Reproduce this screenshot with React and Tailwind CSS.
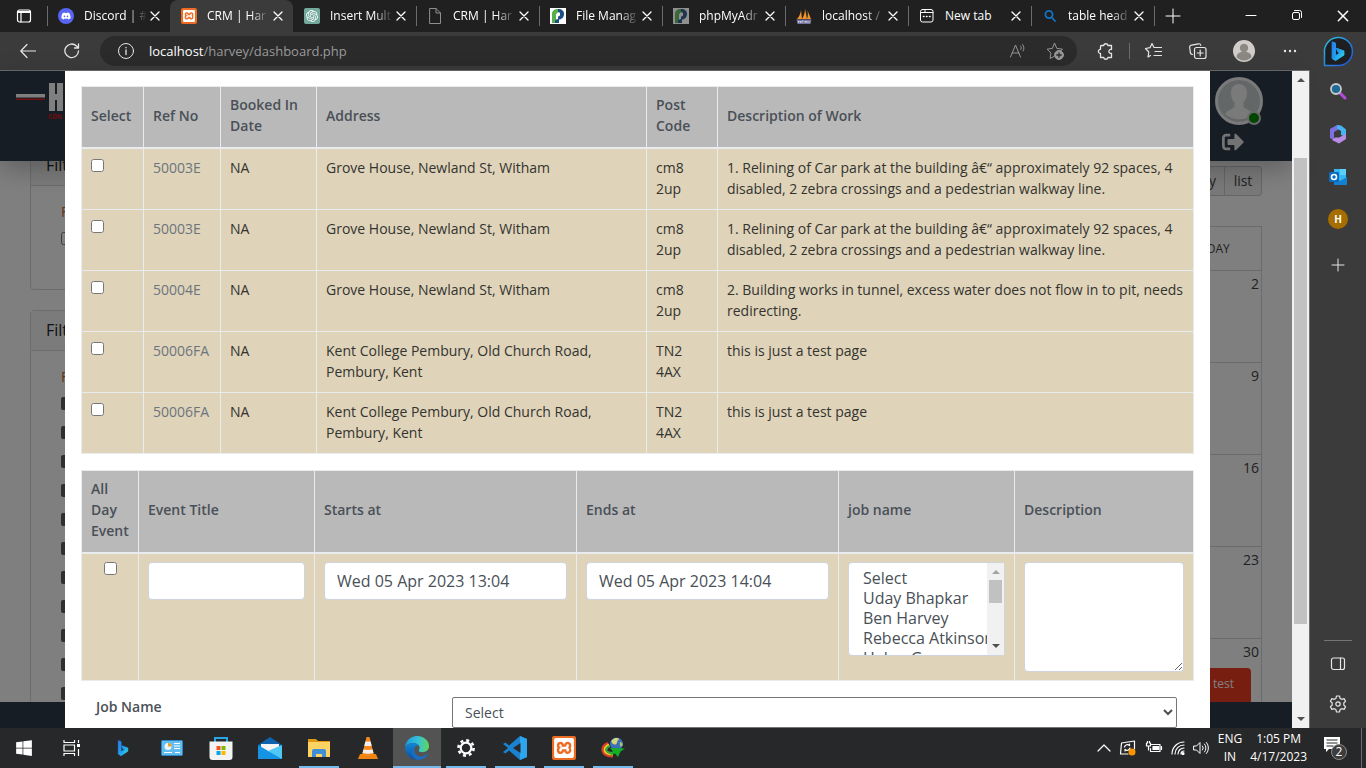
import React from "react";
import { FaDiscord, FaSignOutAlt, FaWindows } from "react-icons/fa";
import { SiOpenai, SiXampp } from "react-icons/si";

/* ---------- favicons ---------- */

function XamppIcon({ size = "size-4", inner = "size-3" }) {
  return (
    <span className={`flex ${size} items-center justify-center rounded-xs bg-[#ee6b22]`}>
      <SiXampp className={`${inner} text-white`} />
    </span>
  );
}

function PleskIcon({ dim }) {
  return (
    <svg viewBox="0 0 16 16" className={dim ? "size-4 opacity-50" : "size-4"}>
      <rect width="16" height="16" fill="#fff" />
      <path d="M2 15V7a5 5 0 0 1 5-6h2v3.500a3 3 0 0 0-3 3V15z" fill="#58b04c" />
      <path d="M8 1c4 0 6 2 6 5s-2 5.500-5 5.500V15H5v-3l3-1V8.500A2 2 0 0 0 10 6 2 2 0 0 0 8 4z" fill="#1c4f86" />
      <circle cx="8.500" cy="6" r="1.600" fill="#fff" />
    </svg>
  );
}

function SailIcon() {
  return (
    <svg viewBox="0 0 16 16" className="size-4">
      <path d="M1 11C3 9 4.500 6 5 2l1 9zM6 11C8 8 9 4 9 .5L11 11zM11 11c1-3 1-5 .5-8.500L15 11z" fill="#f0932b" />
      <path d="M.5 11.500h15l-1 4.500H1.500z" fill="#75739b" />
      <path d="M2.500 15v-2l1 1 1-1v2M6 15v-2h1.500M9 15v-2l1 1 1-1v2M13 13v2" stroke="#e4e3f2" strokeWidth=".7" fill="none" />
    </svg>
  );
}

const line = { fill: "none", stroke: "currentColor", strokeWidth: 1, strokeLinecap: "round", strokeLinejoin: "round" };

function PageIcon() {
  return (
    <svg viewBox="0 0 16 16" className="size-4 text-[#8f8f8f]" {...line}>
      <path d="M3 .5h6l4.500 4.500v10.500H3zM9 .5V5h4.500" />
    </svg>
  );
}

function NewTabIcon() {
  return (
    <svg viewBox="0 0 16 16" className="size-4 text-white" {...line}>
      <rect x="1.500" y="1.500" width="12.500" height="12.500" rx="2" />
      <path d="M1.500 4.500h12.500M6 1.500v3" />
      <path d="M4.500 8.500h.5M7.500 8.500h.5M10.500 8.500h.5" strokeWidth="1.500" />
    </svg>
  );
}

function SearchIcon() {
  return (
    <svg viewBox="0 0 16 16" className="size-4 text-[#1273c4]" {...line} strokeWidth="1.800">
      <circle cx="7" cy="6.500" r="3.600" />
      <path d="M9.800 9.500L13 13" />
    </svg>
  );
}

function Cross({ className = "size-3" }) {
  return (
    <svg viewBox="0 0 12 12" className={className} {...line} strokeWidth="1.300">
      <path d="M2 2l8 8M10 2l-8 8" />
    </svg>
  );
}

const tabs = [
  { title: "Discord | #", icon: <span className="flex size-4 items-center justify-center rounded-full bg-[#5865f2]"><FaDiscord className="size-2.5 text-white" /></span> },
  { title: "CRM | Har", icon: <XamppIcon />, active: true },
  { title: "Insert Mult", icon: <span className="flex size-4 items-center justify-center rounded-xs bg-[#74aa9c]"><SiOpenai className="size-3 text-white" /></span> },
  { title: "CRM | Har", icon: <PageIcon />, sep: true },
  { title: "File Manag", icon: <PleskIcon />, sep: true },
  { title: "phpMyAdr", icon: <PleskIcon dim />, sep: true },
  { title: "localhost /", icon: <SailIcon />, sep: true },
  { title: "New tab", icon: <NewTabIcon />, sep: true, full: true },
  { title: "table head", icon: <SearchIcon />, sep: true },
];

function TabStrip() {
  return (
    <header className="flex h-8 shrink-0 items-center bg-[#202020] text-white">
      <button aria-label="Tab actions" className="flex w-[47px] shrink-0 justify-center">
        <svg viewBox="0 0 16 16" className="size-4" {...line} strokeWidth="1.200">
          <rect x="1.500" y="2" width="13" height="12" rx="2" />
          <path d="M2 3.500h12M2 4.500h12M5 5v9" />
        </svg>
      </button>
      <nav className="flex h-full min-w-0 items-stretch">
        {tabs.map((t, i) => (
          <div
            key={i}
            className={`flex w-[123px] items-center ${t.active ? "rounded-t-lg bg-[#3b3b3b]" : ""}`}
          >
            <span className={`h-5 w-px ${t.sep || i === 0 ? "bg-[#6b6b6b]" : ""}`} />
            <a href="#tab" className="flex min-w-0 items-center gap-2.5 pl-2.5">
              <span className="shrink-0">{t.icon}</span>
              <span
                className={`w-16 whitespace-nowrap text-xs ${
                  t.full ? "" : "[mask-image:linear-gradient(to_right,black_68%,transparent_98%)]"
                }`}
              >
                {t.title}
              </span>
            </a>
            <button aria-label="Close tab" className="ml-px">
              <Cross />
            </button>
          </div>
        ))}
      </nav>
      <span className="h-5 w-px bg-[#6b6b6b]" />
      <button aria-label="Open new tab" className="ml-2.5">
        <svg viewBox="0 0 16 16" className="size-4" {...line}><path d="M8 1v14M1 8h14" /></svg>
      </button>
      <div className="ml-auto flex">
        <button aria-label="Minimise" className="flex w-[46px] justify-center">
          <svg viewBox="0 0 12 12" className="size-3" {...line}><path d="M1 6.500h10" /></svg>
        </button>
        <button aria-label="Restore" className="flex w-[46px] justify-center">
          <svg viewBox="0 0 12 12" className="size-3" {...line}>
            <rect x="1.500" y="3.500" width="7" height="7" rx="1.500" />
            <path d="M3.500 1.500h5a2 2 0 0 1 2 2v5" />
          </svg>
        </button>
        <button aria-label="Close window" className="flex w-[46px] justify-center">
          <Cross className="size-3.5" />
        </button>
      </div>
    </header>
  );
}

function BingMark({ className, id }) {
  return (
    <svg viewBox="0 0 24 26" className={className}>
      <defs>
        <linearGradient id={id} x1="0" y1="0" x2="1" y2="1">
          <stop offset="0" stopColor="#2b7ff0" />
          <stop offset=".5" stopColor="#1f9cf2" />
          <stop offset="1" stopColor="#35dfe0" />
        </linearGradient>
      </defs>
      <path
        d="M5 2l4 1.500v15l5.500-3.200-2.700-1.300-1.700-4.300 9 3.200v5L9 24.500l-4-2.500z"
        fill={`url(#${id})`}
        stroke={`url(#${id})`}
        strokeWidth="1.200"
        strokeLinejoin="round"
      />
    </svg>
  );
}

function AddressBar() {
  return (
    <div className="flex h-[38px] shrink-0 items-center bg-[#3b3b3b] text-[#e6e6e6]">
      <button aria-label="Back" className="ml-5">
        <svg viewBox="0 0 16 16" className="size-4" {...line} strokeWidth="1.200"><path d="M15.500 8H1M7 1.500L.8 8 7 14.500" /></svg>
      </button>
      <button aria-label="Reload" className="ml-7">
        <svg viewBox="0 0 16 16" className="size-4" {...line} strokeWidth="1.300">
          <path d="M14.500 8A6.800 6.800 0 1 1 12.500 3L14.500 5M14.500 1v4h-4" />
        </svg>
      </button>
      <div className="ml-5 flex h-[30px] flex-1 items-center rounded-full bg-[#2b2b2b] pr-3 pl-[17px]">
        <svg viewBox="0 0 18 18" className="size-[18px]" {...line}>
          <circle cx="9" cy="9" r="7.500" />
          <path d="M9 8v4.500M9 5.500v.3" strokeWidth="1.300" />
        </svg>
        <p className="ml-3.5 flex-1 pt-px text-[13px] text-[#9a9a9a]">
          <span className="text-white">localhost</span>/harvey/dashboard.php
        </p>
        <div className="flex items-center gap-[18px] text-[#969696]">
          <button aria-label="Read aloud">
            <svg viewBox="0 0 18 18" className="size-[18px]" {...line}>
              <path d="M1.500 15L6.500 3l5 12M3.200 11h6.600M11.500 4c1 1 1 2.500.3 3.500M13.500 2.500c1.800 2 1.800 4.500.6 6.500" />
            </svg>
          </button>
          <button aria-label="Add to favourites">
            <svg viewBox="0 0 20 20" className="size-5" {...line}>
              <path d="M9 15.500l-4 2 1-5.500-4-3.800 5.400-.8L9.500 2l2.300 5.400 5.700.8-1.500 1.500" />
              <circle cx="14" cy="14" r="4.500" fill="currentColor" />
              <path d="M14 11.800v4.400M11.800 14h4.400" stroke="#2b2b2b" strokeWidth="1.300" />
            </svg>
          </button>
        </div>
      </div>
      <div className="flex items-center pl-[18px]">
        <button aria-label="Extensions">
          <svg viewBox="0 0 20 20" className="size-5" {...line} strokeWidth="1.300">
            <path d="M6.500 4.500h2.200a2.200 2.200 0 0 1 4.300 0h3.500v4a2 2 0 1 0 0 3.800v4.200H13a2.200 2.200 0 0 1-4.300 0H5.500v-4a2.100 2.100 0 1 1 0-4.200V5.500a1 1 0 0 1 1-1z" />
          </svg>
        </button>
        <span className="ml-3.5 h-4 w-px bg-[#6a6a6a]" />
        <button aria-label="Favourites" className="ml-3.5">
          <svg viewBox="0 0 20 20" className="size-5" {...line} strokeWidth="1.200">
            <path d="M6.500 14.500l-2.500 1.500.8-5L1.500 7.500l4.500-.8L8 2.500l2 4h7.500M11 10.500h6.500M10 14.500h7.500" />
          </svg>
        </button>
        <button aria-label="Collections" className="ml-6">
          <svg viewBox="0 0 20 20" className="size-5" {...line} strokeWidth="1.200">
            <path d="M4.500 13.500A2.500 2.500 0 0 1 2.300 11L1.700 6.500a2 2 0 0 1 1.800-2.300l7-1.400a2 2 0 0 1 2.300 1.500M6.500 13.500v-5a2 2 0 0 1 2-2h7.500a2 2 0 0 1 2 2v7a2 2 0 0 1-2 2H8.500a2 2 0 0 1-2-2zM12.200 9v6M9.200 12h6" />
          </svg>
        </button>
        <button aria-label="Profile" className="ml-[25px]">
          <svg viewBox="0 0 22 22" className="size-[22px]">
            <circle cx="11" cy="11" r="11" fill="#d0cdca" />
            <circle cx="11" cy="8" r="4.200" fill="#8c8884" />
            <path d="M3.500 17a7.500 5.500 0 0 1 15 0 10 10 0 0 1-15 0z" fill="#8c8884" />
          </svg>
        </button>
        <button aria-label="Menu" className="ml-[27px]">
          <svg viewBox="0 0 16 4" className="h-1 w-4 fill-current"><circle cx="3" cy="2" r="1.200" /><circle cx="8" cy="2" r="1.200" /><circle cx="13" cy="2" r="1.200" /></svg>
        </button>
        <button aria-label="Bing chat" className="mr-3 ml-6 grid size-8 place-items-center [&>svg]:[grid-area:1/1]">
          <svg viewBox="0 0 32 32" className="size-8">
            <defs>
              <linearGradient id="bubble" x1="0" y1="0" x2="1" y2="1">
                <stop offset="0" stopColor="#2cc3d8" />
                <stop offset="1" stopColor="#1f4fe0" />
              </linearGradient>
            </defs>
            <path d="M2.500 30.500V18A14 14 0 1 1 16 30.500z" fill="#1d1f22" stroke="url(#bubble)" strokeWidth="1.500" strokeLinejoin="round" />
          </svg>
          <BingMark className="h-[22px] w-5" id="bing-top" />
        </button>
      </div>
    </div>
  );
}

/* ---------- dashboard behind the dialog ---------- */

function FilterCard({ tall, children }) {
  return (
    <section className={`mb-5 rounded border border-[#d8d8d8] ${tall ? "h-[420px]" : "h-[145px]"}`}>
      <h2 className="h-10 border-b border-[#d8d8d8] bg-[#f7f7f7] pl-[15px] text-base leading-[38px] text-[#22252b]">Filters</h2>
      <div className="pl-[30px]">{children}</div>
    </section>
  );
}

const sundays = ["2", "9", "16", "23", "30"];

function Dashboard() {
  return (
    <div className="flex h-full flex-col bg-white">
      <div className="relative z-10 flex h-[90px] shrink-0 justify-between bg-[#2e3b4b] shadow-[0_8px_24px_rgba(0,0,0,0.25)]">
        <a href="#home" aria-label="Home" className="ml-4 flex pt-3">
          <svg viewBox="0 0 80 40" className="h-10 w-20">
            <rect x="0" y="11" width="29" height="3.500" fill="#fff" />
            <rect x="0" y="15.500" width="29" height="1.500" fill="#e02020" />
            <path d="M33 0h6v11h2V0h6v28h-6V17h-2v11h-6z" fill="#fff" />
            <path d="M49 10h3v3h-3zM49 18h3v10h-3z" fill="#fff" />
            <text x="32" y="36" fontSize="6" fontWeight="800" fill="#c81e1e">CON</text>
          </svg>
        </a>
        <div className="mr-[29px] flex w-12 flex-col pt-1.5">
          <div className="relative">
            <svg viewBox="0 0 48 48" className="size-12">
              <circle cx="24" cy="24" r="22.500" fill="#c9ced1" stroke="#f4f4f4" strokeWidth="3" />
              <path d="M24 7c-5 0-8 3.500-8 9 0 4 1.500 7.500 3.500 9.500V30c-2 2.500-7 3-9.500 7a21 21 0 0 0 28 0c-2.500-4-7.500-4.500-9.500-7v-4.500c2-2 3.500-5.500 3.500-9.500 0-5.500-3-9-8-9z" fill="#f4f4f4" />
            </svg>
            <span className="absolute right-0.5 bottom-0 size-3.5 rounded-full border-2 border-[#d0d0d0] bg-[#008a00]" />
          </div>
          <a href="#logout" aria-label="Log out" className="ml-[7px] pt-1.5">
            <FaSignOutAlt className="size-[22px] text-[#e6e6e6]" />
          </a>
        </div>
      </div>
      <div className="-mt-4 flex min-h-0 flex-1 justify-between overflow-hidden px-[30px]">
        <div className="w-[300px]">
          <FilterCard>
            <p className="pt-4 text-sm text-[#c8651c]">Filter by</p>
            <input type="checkbox" aria-label="Filter option" className="mt-2.5 block size-[13px]" />
          </FilterCard>
          <FilterCard tall>
            <p className="pt-4 pb-1.5 text-sm text-[#c8651c]">Filter by</p>
            <ul>
              {Array.from({ length: 11 }, (_, i) => (
                <li key={i} className="h-[29px] pt-1">
                  <button aria-label="Collapse" className="flex size-[13px] items-center justify-center rounded-xs bg-[#5f5f5f]">
                    <span className="h-px w-1.5 bg-white" />
                  </button>
                </li>
              ))}
            </ul>
          </FilterCard>
        </div>
        <div className="w-[112px] pt-[21px]">
          <div className="flex h-[30px] justify-end text-sm text-[#444]">
            <button className="border border-[#ccc] bg-[#f2f2f2] px-2">day</button>
            <button className="w-[37px] rounded-r border border-l-0 border-[#ccc] bg-[#f2f2f2]">list</button>
          </div>
          <table className="mt-[30px] w-full border-collapse text-[#444]">
            <thead>
              <tr><th className="h-11 border border-[#d4d6dc] text-xs font-normal">SUNDAY</th></tr>
            </thead>
            <tbody>
              {sundays.map((d) => (
                <tr key={d}>
                  <td className="h-[92px] border border-[#d4d6dc] pt-[3px] pr-0.5 text-right align-top text-sm leading-5">
                    {d}
                    {d === "30" && (
                      <span className="relative mt-1.5 mr-2 block h-9 rounded bg-[#f03c22] pt-2 pr-[17px] text-right text-xs text-white">test</span>
                    )}
                  </td>
                </tr>
              ))}
            </tbody>
          </table>
        </div>
      </div>
      <div className="h-[26px] shrink-0 bg-[#2e3b4b]" />
    </div>
  );
}

/* ---------- dialog ---------- */

const jobs = [
  ["50003E", "Grove House, Newland St, Witham", "cm8 2up", "1. Relining of Car park at the building â€“ approximately 92 spaces, 4 disabled, 2 zebra crossings and a pedestrian walkway line."],
  ["50003E", "Grove House, Newland St, Witham", "cm8 2up", "1. Relining of Car park at the building â€“ approximately 92 spaces, 4 disabled, 2 zebra crossings and a pedestrian walkway line."],
  ["50004E", "Grove House, Newland St, Witham", "cm8 2up", "2. Building works in tunnel, excess water does not flow in to pit, needs redirecting."],
  ["50006FA", "Kent College Pembury, Old Church Road, Pembury, Kent", "TN2 4AX", "this is just a test page"],
  ["50006FA", "Kent College Pembury, Old Church Road, Pembury, Kent", "TN2 4AX", "this is just a test page"],
];

function Th({ children, className = "" }) {
  return (
    <th className={`border border-b-2 border-[#e9ecef] bg-[#b9b9b9] px-[9px] pt-[7px] pb-[11px] text-left align-middle font-semibold text-[#495057] ${className}`}>
      {children}
    </th>
  );
}

function Td({ children, pad = "pt-2 pb-2.5", className = "" }) {
  return <td className={`border border-[#e9ecef] bg-[#dfd3b9] px-[9px] align-top ${pad} ${className}`}>{children}</td>;
}

function JobsTable() {
  return (
    <table className="w-full table-fixed border-collapse text-sm leading-[21px] text-[#333330]">
      <thead>
        <tr>
          <Th className="w-[62px]">Select</Th>
          <Th className="w-[77px]">Ref No</Th>
          <Th className="w-24">Booked In Date</Th>
          <Th className="w-[330px]">Address</Th>
          <Th className="w-[71px]">Post Code</Th>
          <Th>Description of Work</Th>
        </tr>
      </thead>
      <tbody>
        {jobs.map(([ref, address, code, work], i) => (
          <tr key={i}>
            <Td><input type="checkbox" aria-label={`Select ${ref}`} className="mt-0.5 block size-[13px]" /></Td>
            <Td className="whitespace-nowrap"><a href="#job" className="text-[#6c757d]">{ref}</a></Td>
            <Td>NA</Td>
            <Td>{address}</Td>
            <Td>{code}</Td>
            <Td>{work}</Td>
          </tr>
        ))}
      </tbody>
    </table>
  );
}

const field = "block w-full rounded border border-[#ced4da] bg-white text-base text-[#495057]";

function ScrollArrow({ up, className = "text-[#505050]" }) {
  return (
    <svg viewBox="0 0 8 4" className={`h-1 w-2 fill-current ${className}`}>
      <path d={up ? "M0 4l4-4 4 4z" : "M0 0l4 4 4-4z"} />
    </svg>
  );
}

function EventTable() {
  return (
    <table className="mt-4 w-full table-fixed border-collapse text-sm leading-[21px]">
      <thead>
        <tr>
          <Th className="w-[57px]">All Day Event</Th>
          <Th className="w-44">Event Title</Th>
          <Th className="w-[262px]">Starts at</Th>
          <Th className="w-[262px]">Ends at</Th>
          <Th className="w-44">job name</Th>
          <Th>Description</Th>
        </tr>
      </thead>
      <tbody>
        <tr>
          <Td pad="py-2"><input type="checkbox" aria-label="All day event" className="mx-auto block size-[13px]" /></Td>
          <Td pad="py-2"><input type="text" aria-label="Event title" className={`${field} h-[38px] px-3`} /></Td>
          <Td pad="py-2"><input type="text" aria-label="Starts at" defaultValue="Wed 05 Apr 2023 13:04" className={`${field} h-[38px] px-3`} /></Td>
          <Td pad="py-2"><input type="text" aria-label="Ends at" defaultValue="Wed 05 Apr 2023 14:04" className={`${field} h-[38px] px-3`} /></Td>
          <Td pad="py-2">
            <div className="relative">
              <select multiple aria-label="Job name" className={`${field} h-[94px] overflow-hidden px-3 py-1 [scrollbar-width:none]`}>
                {["Select", "Uday Bhapkar", "Ben Harvey", "Rebecca Atkinson", "Helen Green"].map((n) => (
                  <option key={n} className="h-5 px-0.5 leading-5">{n}</option>
                ))}
              </select>
              <div className="absolute inset-y-px right-px flex w-[17px] flex-col items-center bg-[#f1f1f1] py-[7px]">
                <ScrollArrow up className="text-[#a3a3a3]" />
                <span className="mt-1.5 h-[23px] w-[13px] bg-[#c1c1c1]" />
                <span className="flex-1" />
                <ScrollArrow />
              </div>
            </div>
          </Td>
          <Td pad="py-2"><textarea aria-label="Description" className={`${field} h-[110px] resize px-3 py-1.5`} /></Td>
        </tr>
      </tbody>
    </table>
  );
}

function Dialog() {
  return (
    <div role="dialog" aria-label="Schedule" className="mr-[82px] ml-[65px] min-w-0 flex-1 overflow-hidden bg-white px-4 pt-[15px]">
      <JobsTable />
      <EventTable />
      <div className="flex items-start pt-4 pr-[17px] pl-[15px]">
        <label htmlFor="job" className="w-[356px] shrink-0 text-sm font-semibold text-[#495057]">Job Name</label>
        <select id="job" className="h-[31px] min-w-0 flex-1 rounded-xs border border-[#767676] bg-white px-2 text-sm text-[#495057]">
          <option>Select</option>
        </select>
      </div>
    </div>
  );
}

/* ---------- browser side bar and task bar ---------- */

function SideBar() {
  return (
    <aside className="flex w-14 shrink-0 flex-col items-center bg-[#3b3b3b] pt-3 pb-[15px] text-[#e6e6e6]">
      <button aria-label="Search">
        <svg viewBox="0 0 18 18" className="size-[18px]" fill="none">
          <path d="M11 11l5 5" stroke="#b44ae0" strokeWidth="3" strokeLinecap="round" />
          <circle cx="7" cy="7" r="5" fill="#1e6c96" stroke="#c9c9c9" strokeWidth="1.800" />
        </svg>
      </button>
      <button aria-label="Microsoft 365" className="mt-6">
        <svg viewBox="0 0 18 20" className="h-5 w-[18px]">
          <path d="M8 1L1 5v9l4 2V8l6-3.500V1.500z" fill="#7f6fe0" />
          <path d="M8 1l4 .5 5 4V13l-5-2V7L8 4.500z" fill="#46b4f0" />
          <path d="M17 10v5l-7 4.500L3 16l3-2.500h4z" fill="#b98be6" />
        </svg>
      </button>
      <button aria-label="Outlook" className="mt-6">
        <svg viewBox="0 0 18 18" className="size-[18px]">
          <path d="M5 1h12v13H5z" fill="#35b8f1" />
          <path d="M11 1h6v6h-6z" fill="#5bd1fa" />
          <path d="M5 9l6 4 7-4v8H5z" fill="#1480cf" />
          <rect x="0" y="4" width="10" height="10" rx="1" fill="#0a6cc4" />
          <circle cx="5" cy="9" r="2.500" fill="none" stroke="#fff" strokeWidth="1.500" />
        </svg>
      </button>
      <button className="mt-[23px] size-5 rounded-full bg-[#a66d00] text-[10px] leading-5 font-bold text-white">H</button>
      <button aria-label="Add" className="mt-[29px]">
        <svg viewBox="0 0 14 14" className="size-3.5" {...line}><path d="M7 1v12M1 7h12" /></svg>
      </button>
      <span className="mt-auto h-px w-7 bg-[#757575]" />
      <button aria-label="Toggle side bar" className="mt-4">
        <svg viewBox="0 0 16 14" className="h-3.5 w-4" {...line} strokeWidth="1.200"><rect x="1.500" y="1" width="13" height="11.500" rx="2" /><path d="M10.500 1v11.500" /></svg>
      </button>
      <button aria-label="Settings" className="mt-6">
        <svg viewBox="0 0 18 18" className="size-[18px]" {...line} strokeWidth="1.200">
          <path d="M7.500 1h3l.6 2.400 1.600.9 2.400-.7 1.500 2.600-1.800 1.800v2l1.800 1.800-1.500 2.600-2.400-.7-1.600.9-.6 2.400h-3l-.6-2.400-1.600-.9-2.400.7L1.400 11.800 3.200 10V8L1.400 6.200l1.500-2.600 2.400.7 1.600-.9z" />
          <circle cx="9" cy="9" r="2.200" />
        </svg>
      </button>
    </aside>
  );
}

const EdgeLogo = () => (
  <svg viewBox="0 0 24 24" className="size-6">
    <defs>
      <linearGradient id="edge-a" x1="0" y1=".3" x2="1" y2=".3"><stop offset="0" stopColor="#1c9bdc" /><stop offset=".55" stopColor="#35c1d8" /><stop offset="1" stopColor="#5fd855" /></linearGradient>
      <linearGradient id="edge-b" x1="0" y1="0" x2="0" y2="1"><stop offset="0" stopColor="#1387d6" /><stop offset="1" stopColor="#0d4f9e" /></linearGradient>
    </defs>
    <path d="M0 11.500C.5 5 5.500 0 12 0s12 4.500 12 10c0 4-3 6.200-6.500 6.200-2.500 0-3.800-.8-3.800-1.700 0-.6.900-.9.900-2.500 0-2.600-2.600-5-6.300-5C4 7 1 9 0 11.500z" fill="url(#edge-a)" />
    <path d="M0 12.500C.5 9 4 7 8.300 7c2.500 0 4.300 1 5.300 2.200C9.500 9.500 8.500 13 9 16c.8 4.300 5 6.200 9 6A12 12 0 0 1 0 12.500z" fill="url(#edge-b)" />
    <path d="M10.500 11.500C8.800 13 9 16.500 11 18.500c3 3 8 2.500 11.500-.5.500-.4 1 .1.600.6C21 21.800 17.500 24 13 24c-4.500-1-7-5-6.500-8 .3-2.200 1.900-4 4-4.500z" fill="#1b6dc0" />
  </svg>
);

const taskItems = [
  { name: "Bing", icon: <BingMark className="h-[18px] w-4" id="bing-task" /> },
  {
    name: "Control Panel",
    icon: (
      <svg viewBox="0 0 22 16" className="h-4 w-[22px]">
        <rect x=".5" y=".5" width="21" height="15" rx="1" fill="#62bdf0" stroke="#2c86c6" />
        <circle cx="7" cy="6.500" r="3.500" fill="#e9f6ff" /><path d="M7 6.500V3a3.500 3.500 0 0 1 3.500 3.500z" fill="#f29b1d" />
        <path d="M13 3.500h6M13 6h6M13 8.500h6M3 12.500h8M14 12.500h5" stroke="#fff" strokeWidth="1.200" />
      </svg>
    ),
  },
  {
    name: "Store",
    icon: (
      <svg viewBox="0 0 24 24" className="size-6">
        <path d="M6 7V2h12v5" stroke="#2aa5e8" strokeWidth="2" fill="none" />
        <path d="M.5 5.500h23V21a3 3 0 0 1-3 3h-17a3 3 0 0 1-3-3z" fill="#f3f3f3" />
        <path d="M7.500 10H11.500v4h-4z" fill="#f25022" /><path d="M12.500 10h4v4h-4z" fill="#7fba00" />
        <path d="M7.500 15H11.500v4h-4z" fill="#00a4ef" /><path d="M12.500 15h4v4h-4z" fill="#ffb900" />
      </svg>
    ),
  },
  {
    name: "Mail",
    icon: (
      <svg viewBox="0 0 24 24" className="size-6">
        <path d="M0 9l12-8 12 8v3H0z" fill="#0d63b0" /><path d="M3 8h18v8H3z" fill="#f4f4f4" />
        <path d="M0 9l12 7 12-7v14H0z" fill="#1793e6" /><path d="M24 9v14L10 15z" fill="#50c8f5" />
      </svg>
    ),
  },
  {
    name: "File Explorer",
    open: true,
    icon: (
      <svg viewBox="0 0 22 20" className="h-5 w-[22px]">
        <path d="M0 1h8l2 2h12v4H0z" fill="#e09a12" /><path d="M0 4h22v15H0z" fill="#ffd363" />
        <path d="M4 19v-6a2 2 0 0 1 2-2h10a2 2 0 0 1 2 2v6h-4v-3H8v3z" fill="#3f8fd6" />
      </svg>
    ),
  },
  {
    name: "VLC",
    icon: (
      <svg viewBox="0 0 20 24" className="h-6 w-5">
        <path d="M2 18h16l2 5H0z" fill="#f08410" /><path d="M8.500 1h3L16 19a9 3 0 0 1-12 0z" fill="#f5871f" />
        <path d="M7.400 5.500h5.200l1.100 4.200a8 3 0 0 1-7.400 0zM5.400 13.500a9 3 0 0 0 9.200 0l.9 3.500a9 3 0 0 1-11 0z" fill="#f0f0f0" />
      </svg>
    ),
  },
  { name: "Edge", open: true, active: true, icon: <EdgeLogo /> },
  {
    name: "Settings",
    open: true,
    icon: (
      <svg viewBox="0 0 20 20" className="size-5" fill="none" stroke="#fff">
        <circle cx="10" cy="10" r="5.300" strokeWidth="2.200" />
        <circle cx="10" cy="10" r="7.600" strokeWidth="2.600" strokeDasharray="2.980 2.988" />
      </svg>
    ),
  },
  {
    name: "Visual Studio Code",
    open: true,
    icon: (
      <svg viewBox="0 0 24 24" className="size-6">
        <path d="M17 0l7 3v18l-7 3L6 14.500 2.500 17.500 0 16l5-4-5-4 2.500-1.500L6 9.500z" fill="#1a82cf" />
        <path d="M17 0l7 3v18l-7 3z" fill="#2da5ef" /><path d="M17.500 7v10L10 12z" fill="#292929" />
      </svg>
    ),
  },
  { name: "XAMPP", open: true, icon: <XamppIcon size="size-6" inner="size-5" /> },
  {
    name: "Download Manager",
    open: true,
    icon: (
      <svg viewBox="0 0 24 22" className="h-[22px] w-6">
        <path d="M7 6C3 7.500 1 10 1.500 13.500 2 17 6 20 12 19.500" stroke="#e23b2e" strokeWidth="2" fill="none" />
        <path d="M8 7.500C5 9 3 11 3.500 13.500c.5 2.500 4 4.500 8.500 4" stroke="#f2c91c" strokeWidth="2" fill="none" />
        <path d="M9 9c-2.500 1-4 2.500-3.500 4.500.5 1.500 3 2.500 6.500 2" stroke="#35a847" strokeWidth="2" fill="none" />
        <circle cx="15.500" cy="7" r="6.500" fill="#3f6fb9" />
        <path d="M11 3c2.500-2.500 5-2.500 7-1.500 0 1.500-2 2-2 4s-3 3-4.500 1S10 4.500 11 3z" fill="#d3d67a" />
        <path d="M19 5c1.500 0 2.500 1 2.800 3l-2 2c-1-1.500-1.300-3-.8-5z" fill="#a9c46a" />
        <path d="M9 11l15 .5-4.500 3L17 20l-3-3.500-5 2 3-4z" fill="#12b022" />
      </svg>
    ),
  },
];

function TaskBar() {
  return (
    <footer className="flex h-10 shrink-0 items-stretch bg-[#272829] text-white">
      <button aria-label="Start" className="flex w-12 items-center justify-center"><FaWindows className="size-[18px]" /></button>
      <button aria-label="Task view" className="mr-[3px] flex w-12 items-center justify-center">
        <svg viewBox="0 0 18 16" className="h-4 w-[18px]" fill="none" stroke="currentColor" strokeWidth="1.200">
          <path d="M1 0v2.500h10.500V0M1 16v-2.500h10.500V16M1 5h10.500v6H1zM15.500 0v3M15.500 9v7" /><path d="M14 4h3v3h-3z" fill="currentColor" stroke="none" />
        </svg>
      </button>
      <div className="flex gap-px">
        {taskItems.map((t) => (
          <button
            key={t.name}
            aria-label={t.name}
            className={`flex w-12 flex-col items-center ${t.active ? "bg-[#535353]" : ""}`}
          >
            <span className="flex flex-1 items-center">{t.icon}</span>
            <span className={`-mt-0.5 h-0.5 ${t.active ? "w-12" : "w-10"} ${t.open ? "bg-[#76b9ed]" : ""}`} />
          </button>
        ))}
      </div>
      <div className="ml-auto flex items-center">
        <div className="flex items-center gap-2">
          <svg viewBox="0 0 14 8" className="h-2 w-3.5" {...line} strokeWidth="1.200"><path d="M1 7l6-6 6 6" /></svg>
          <svg viewBox="0 0 18 16" className="h-4 w-[18px]" {...line} strokeWidth="1.200">
            <path d="M9 14H1.500L2.500 3l13-2v8M5.500 7a3 3 0 0 1 5-1.500V4M11 8a3 3 0 0 1-5 1.500V11" />
            <circle cx="13" cy="12" r="3.500" fill="#ff9500" stroke="none" />
          </svg>
          <svg viewBox="0 0 18 14" className="h-3.5 w-[18px]" {...line} strokeWidth="1.200">
            <path d="M1.500 2v3h4V2M2.500 0v2M4.500 0v2M3.500 5v4M6.500 3.500H15v7H5.500v-3M16.500 5.500v3" /><path d="M8 5.500h5.500v3H8z" fill="currentColor" />
          </svg>
          <svg viewBox="0 0 14 14" className="size-3.5" {...line} strokeWidth="1.200">
            <path d="M1 13A12 12 0 0 1 13 1M4 13a9 9 0 0 1 9-9M7 13a6 6 0 0 1 6-6M10 13a3 3 0 0 1 3-3" /><circle cx="12" cy="12.500" r="1" fill="currentColor" />
          </svg>
          <svg viewBox="0 0 17 14" className="h-3.5 w-[17px]" {...line}>
            <path d="M1 5h2.500L7 1.500v11L3.500 9H1zM9.500 5a3 3 0 0 1 0 4M11.500 3a6 6 0 0 1 0 8M13.500 1.500a8.500 8.500 0 0 1 0 11" />
          </svg>
        </div>
        <div className="ml-2 text-center text-xs leading-[18px]">ENG<br />IN</div>
        <div className="ml-2 text-center text-xs leading-[18px]">1:05 PM<br />4/17/2023</div>
        <button aria-label="Notifications" className="mr-3 ml-4">
          <svg viewBox="0 0 26 24" className="h-6 w-[26px]">
            <path d="M1 1h16v12H6l-3 3v-3H1z" fill="#fff" /><path d="M3.500 4h11M3.500 7h11M3.500 10h7" stroke="#272829" />
            <circle cx="16" cy="16" r="7.500" fill="#3c3c3c" stroke="#8c8c8c" />
            <text x="16" y="20" textAnchor="middle" fontSize="12" fill="#fff">2</text>
          </svg>
        </button>
        <span className="mr-1 h-10 w-px bg-[#6a6a6a]" />
      </div>
    </footer>
  );
}

export default function App() {
  return (
    <div className="flex h-screen flex-col overflow-hidden font-['Open_Sans','Noto_Sans',sans-serif]">
      <TabStrip />
      <AddressBar />
      <div className="flex min-h-0 flex-1">
        <main className="relative min-w-0 flex-1 border-t border-r border-[#6b6b6b]">
          <div className="h-full pr-[17px]"><Dashboard /></div>
          <div className="absolute inset-0 z-20 flex bg-black/50">
            <Dialog />
            <div className="flex w-[17px] flex-col items-center bg-[#f1f1f1] py-[7px]">
              <ScrollArrow up />
              <span className="mt-[76px] h-[466px] w-[13px] bg-[#c1c1c1]" />
              <span className="flex-1" />
              <ScrollArrow />
            </div>
          </div>
        </main>
        <SideBar />
      </div>
      <TaskBar />
    </div>
  );
}
